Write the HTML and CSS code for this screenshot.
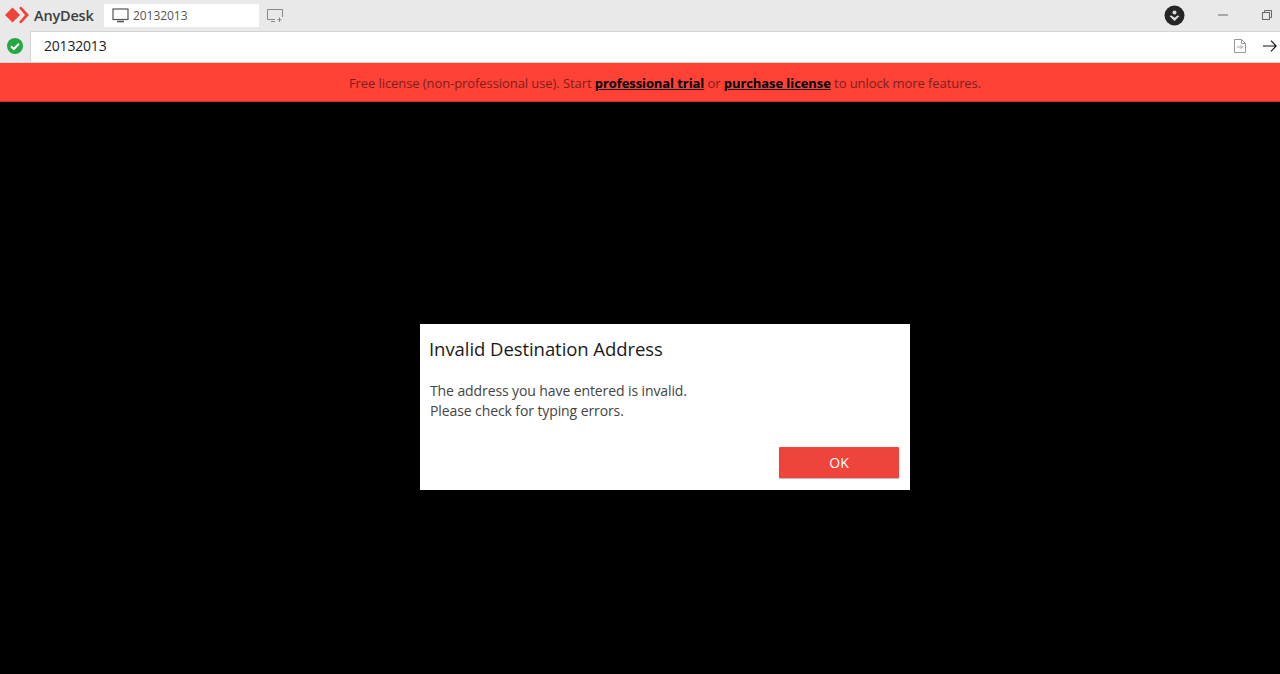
FILE: index.html
```html
<!DOCTYPE html>
<html lang="en">
<head>
<meta charset="utf-8">
<title>AnyDesk</title>
<link rel="stylesheet" href="styles.css">
</head>
<body>
<header class="titlebar">
  <svg class="logo" width="24" height="18" viewBox="0 0 24 18"><path d="M0 9 7.500 1.500 15 9l-7.500 7.500z" fill="#ef443b"/><path d="M14 2 16 .5 24 9l-8 8.500-2-1.500L20 9z" fill="#ef443b"/></svg>
  <span class="brand">AnyDesk</span>
  <div class="tab">
    <svg width="17" height="15" viewBox="0 0 17 15" fill="none" stroke="#555" stroke-width="1.2"><rect x="1" y="1" width="15" height="10.500"/><path d="M5 13.500h7" stroke-width="1.600"/></svg>
    <span>20132013</span>
  </div>
  <svg class="newtab" width="18" height="15" viewBox="0 0 18 15" fill="none" stroke="#888" stroke-width="1"><path d="M9 11.500H1.500V1.500h15V9"/><path d="M5 13.500h4M13.500 9.500v4.500M11.500 11.700h4"/></svg>
  <div class="spacer"></div>
  <svg class="download" width="21" height="21" viewBox="0 0 21 21"><circle cx="10.500" cy="10.500" r="10" fill="#262626"/><circle cx="10.500" cy="7.500" r="2" fill="#ddd"/><path d="M5.500 11l5 5 5-5-2-.5-3 2.200-3-2.200z" fill="#ddd"/></svg>
  <svg class="winbtn min" width="10" height="2" viewBox="0 0 10 2"><path d="M0 1h10" stroke="#666"/></svg>
  <svg class="winbtn restore" width="10" height="10" viewBox="0 0 10 10" fill="none" stroke="#666"><rect x=".5" y="2.500" width="7" height="7"/><path d="M2.500 2.500v-2h7v7h-2"/></svg>
</header>
<div class="addressbar">
  <svg class="status" width="16" height="16" viewBox="0 0 16 16"><circle cx="8" cy="8" r="8" fill="#25a744"/><path d="M4 8.200l2.800 2.800L12 5.800" fill="none" stroke="#fff" stroke-width="2"/></svg>
  <div class="field">
    <span class="address">20132013</span>
    <svg class="file" width="12" height="14" viewBox="0 0 12 14" fill="none" stroke="#999"><path d="M.5.500h7l4 4v9h-11z"/><path d="M7.500.500v4h4"/><path d="M3 8h5.500M6.500 6l2 2-2 2" stroke="#aaa"/></svg>
    <svg class="go" width="14" height="12" viewBox="0 0 14 12" fill="none" stroke="#111" stroke-width="1.100"><path d="M0 6h13M8 .7 13.200 6 8 11.300"/></svg>
  </div>
</div>
<div class="banner">
  <p>Free license (non-professional use). Start <a href="#">professional trial</a> or <a href="#">purchase license</a> to unlock more features.</p>
</div>
<main class="stage">
  <section class="dialog">
    <h1>Invalid Destination Address</h1>
    <p>The address you have entered is invalid.<br>Please check for typing errors.</p>
    <div class="actions"><button type="button">OK</button></div>
  </section>
</main>
</body>
</html>
```
FILE: styles.css
```css
* { box-sizing: border-box; }
html, body { margin: 0; height: 100%; }
body {
  display: flex;
  flex-direction: column;
  background: #000;
  font-family: "Open Sans", "Noto Sans", sans-serif;
  overflow: hidden;
}
.titlebar {
  height: 30px;
  background: #e9e9e9;
  display: flex;
  align-items: center;
  padding-left: 5px;
}
.logo { flex: none; margin-right: 5px; }
.brand { font-size: 14.500px; font-weight: 600; color: #3d3d3d; width: 70px; letter-spacing: -0.2px; }
.tab {
  width: 155px;
  height: 23px;
  background: #fff;
  display: flex;
  align-items: center;
  gap: 4px;
  padding-left: 8px;
  font-size: 12px;
  color: #555;
  letter-spacing: -0.05px;
}
.newtab { margin-left: 7px; }
.spacer { flex: 1; }
.download { margin-right: 33px; }
.winbtn.min { margin-right: 34px; }
.winbtn.restore { margin-right: 8px; }
.addressbar {
  height: 33px;
  background: #e9e9e9;
  display: flex;
  align-items: center;
  padding-left: 7px;
  border-bottom: 1px solid #d8d8d8;
}
.field {
  flex: 1;
  height: 31px;
  margin-left: 7px;
  background: #fff;
  border-top: 1px solid #d4d4d4;
  border-left: 1px solid #d4d4d4;
  display: flex;
  align-items: center;
  padding: 0 3px 2px 13px;
}
.address { flex: 1; font-size: 14px; color: #222; letter-spacing: -0.2px; }
.file { margin-right: 17px; }
.banner {
  height: 39px;
  background: #ff4136;
  border-bottom: 1px solid #c8332b;
  display: flex;
  align-items: center;
  justify-content: center;
  padding: 2px 0 0 50px;
}
.banner p { margin: 0; font-size: 13px; color: #7c1f1a; letter-spacing: -0.08px; }
.banner a { color: #000; font-weight: 700; }
.stage { flex: 1; padding: 222px 0 0 420px; }
.dialog {
  width: 490px;
  height: 166px;
  background: #fff;
  padding: 13px 11px 12px 10px;
  display: flex;
  flex-direction: column;
}
.dialog h1 { margin: 0 0 0 -1px; font-size: 18.500px; font-weight: 400; line-height: 24px; color: #1a1a1a; letter-spacing: -0.06px; }
.dialog p { margin: 20px 0 0; font-size: 14px; line-height: 20px; color: #444; letter-spacing: -0.1px; }
.actions { margin-top: auto; display: flex; justify-content: flex-end; }
.actions button {
  width: 120px;
  height: 31px;
  border: 0;
  border-radius: 1px;
  background: #ef443b;
  color: #fff;
  font: 500 14px "Open Sans", sans-serif;
  box-shadow: 0 1px 1px #b5b5b5;
}
```
